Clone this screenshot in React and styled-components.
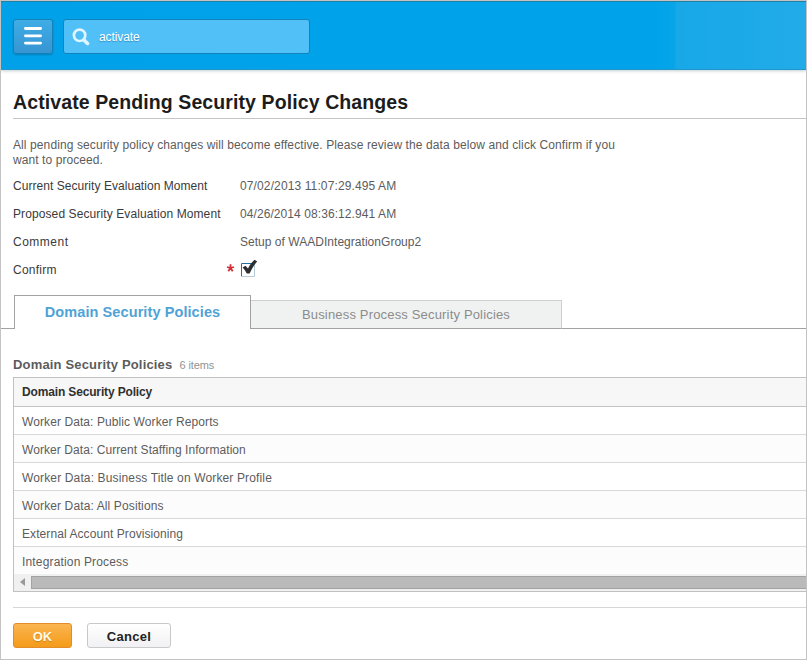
import React from "react";
import styled, { createGlobalStyle } from "styled-components";

const GlobalStyle = createGlobalStyle`
  * { box-sizing: border-box; }
  body {
    margin: 0;
    background: #fff;
    font-family: "Liberation Sans", Arial, sans-serif;
    font-size: 12px;
    color: #5c5c5c;
  }
`;

const Window = styled.div`
  width: 807px;
  height: 660px;
  border: 1px solid #c3c3c3;
  overflow: hidden;
  background: #fff;
`;

const TopBar = styled.header`
  height: 69px;
  padding: 17px 12px 0;
  display: flex;
  gap: 10px;
  border-top: 1px solid #2180a6;
  border-bottom: 1px solid #2196cb;
  background: linear-gradient(90deg, #00a1e8 0, #00a3ea 655px, #08a5e8 674px, #18a8e8 675px, #22abe8 100%);
  box-shadow: 0 1px 3px rgba(0, 60, 80, 0.25);
`;

const MenuButton = styled.button`
  width: 40px;
  height: 35px;
  padding: 0 0 1px;
  border: 1px solid #1482b8;
  border-radius: 3px;
  background: linear-gradient(#3fade6, #3695d2);
  box-shadow: 0 1px 2px rgba(0, 70, 110, 0.35);
  display: flex;
  align-items: center;
  justify-content: center;
`;

const SearchBox = styled.div`
  width: 247px;
  height: 35px;
  padding: 0 8px;
  border: 1px solid #1283b9;
  border-radius: 3px;
  background: #50c0f7;
  display: flex;
  align-items: center;
  gap: 9px;
`;

const Query = styled.span`
  color: #fff;
  letter-spacing: -0.1px;
  text-shadow: 0 1px 1px rgba(0, 80, 130, 0.4);
`;

const Title = styled.h1`
  margin: 0 0 0 12px;
  height: 49px;
  padding-top: 20px;
  border-bottom: 1px solid #c5c5c5;
  font-size: 19.5px;
  line-height: 24px;
  font-weight: bold;
  color: #1c1c1c;
  letter-spacing: 0.1px;
  white-space: nowrap;
`;

const Intro = styled.p`
  margin: 19px 0 0 12px;
  line-height: 15px;
  white-space: nowrap;
`;

const IntroLine = styled.span`
  display: block;
  letter-spacing: ${(p) => p.$track || 0}px;
`;

const Fields = styled.dl`
  margin: 4px 0 0 12px;
`;

const Field = styled.div`
  height: 28px;
  display: grid;
  grid-template-columns: 213px 14px 1fr;
  align-items: center;
  white-space: nowrap;
`;

const Label = styled.dt`
  color: #3a3a3a;
  letter-spacing: ${(p) => p.$track || 0}px;
`;

const Required = styled.span`
  height: 15px;
  svg { display: block; }
`;

const Value = styled.dd`
  margin: 0;
  letter-spacing: ${(p) => p.$track || 0}px;
`;

const CheckCell = styled.dd`
  margin: 0;
  padding-bottom: 4px;
  svg { display: block; }
`;

const Tabs = styled.nav`
  display: flex;
  align-items: flex-end;
  margin-top: 11px;
  height: 34px;
  &::before { content: ""; width: 13px; border-bottom: 1px solid #a2a2a2; }
  &::after { content: ""; flex: 1; border-bottom: 1px solid #a2a2a2; }
`;

const ActiveTab = styled.div`
  width: 237px;
  height: 34px;
  border: 1px solid #a2a2a2;
  border-bottom: 0;
  text-align: center;
  font-size: 14.5px;
  line-height: 32px;
  font-weight: bold;
  color: #4fa3d6;
  letter-spacing: 0.09px;
`;

const Tab = styled.div`
  width: 311px;
  height: 29px;
  border: 1px solid #cfcfcf;
  border-left: 0;
  border-bottom-color: #a2a2a2;
  background: #f0f2f1;
  text-align: center;
  font-size: 13px;
  line-height: 27px;
  color: #8c8c8c;
  letter-spacing: 0.17px;
`;

const Caption = styled.div`
  margin: 27px 0 0 12px;
  height: 21px;
  line-height: 18px;
  display: flex;
  gap: 7px;
`;

const CaptionTitle = styled.h2`
  margin: 0;
  font-size: 13px;
  font-weight: bold;
  letter-spacing: 0.17px;
`;

const Count = styled.span`
  font-size: 11px;
  line-height: 19px;
  color: #929292;
  letter-spacing: -0.1px;
`;

const Grid = styled.div`
  margin-left: 12px;
  height: 215px;
  border: 1px solid #c1c1c1;
  border-right: 0;
`;

const HeadRow = styled.div`
  height: 29px;
  padding-left: 8px;
  line-height: 29px;
  border-bottom: 1px solid #c3c3c3;
  background: #f7f7f7;
  color: #303030;
  font-weight: bold;
  letter-spacing: -0.15px;
`;

const Row = styled.div`
  height: 28px;
  padding-left: 8px;
  line-height: 30px;
  letter-spacing: ${(p) => p.$track || 0}px;
  border-bottom: 1px solid #d8d8d8;
  &:nth-child(odd) { background: #fcfcfc; }
  &:nth-last-child(2) { height: 27px; border-bottom: 0; }
`;

const ScrollTrack = styled.div`
  height: 17px;
  display: flex;
  background: #f0f0f0;
`;

const ScrollArrow = styled.span`
  width: 17px;
  padding: 4px 0 0 6px;
  svg { display: block; }
`;

const Thumb = styled.div`
  flex: 1;
  margin-top: 2px;
  height: 13px;
  border: 1px solid #a3a3a3;
  border-right: 0;
  background: #bababa;
`;

const Actions = styled.footer`
  margin: 15px 0 0 12px;
  padding-top: 15px;
  border-top: 1px solid #d6d6d6;
  display: flex;
  gap: 15px;
`;

const Button = styled.button`
  width: ${(p) => (p.$primary ? 59 : 84)}px;
  height: 25px;
  padding: 1px 0 0;
  border: 1px solid ${(p) => (p.$primary ? "#e28c2b" : "#c9c9c9")};
  border-radius: 3px;
  background: ${(p) => (p.$primary ? "linear-gradient(#fbb550, #f49b19)" : "linear-gradient(#fff, #f1f1f3)")};
  color: ${(p) => (p.$primary ? "#fffbe9" : "#222")};
  font: bold 13px "Liberation Sans", Arial, sans-serif;
  letter-spacing: ${(p) => (p.$primary ? 0 : 0.3)}px;
  text-shadow: ${(p) => (p.$primary ? "0 1px 1px rgba(150, 80, 0, .4)" : "none")};
`;

const MenuIcon = () => (
  <svg width="18" height="18" viewBox="0 0 18 18" fill="none" stroke="#fff" strokeWidth="2.8" strokeLinecap="round">
    <path d="M1.4 1.5H16.6M1.4 8.8H16.6M1.4 16.1H16.6" />
  </svg>
);

const SearchIcon = () => (
  <svg width="18" height="18" viewBox="0 0 18 18" fill="none" stroke="#dff5ff">
    <circle cx="7.6" cy="7.3" r="5.7" strokeWidth="2.7" />
    <path d="M12 11.9L15.5 15.4" strokeWidth="3.6" strokeLinecap="round" />
  </svg>
);

const Asterisk = () => (
  <svg width="9" height="10" viewBox="0 0 9 10" stroke="#d42e36" strokeWidth="1.8">
    <path d="M4.5 5V1.2M4.5 5L1 4M4.5 5L8 4M4.5 5L2.3 8.3M4.5 5L6.7 8.3" />
  </svg>
);

const Checkbox = () => (
  <svg width="18" height="18" viewBox="0 0 18 18" fill="none">
    <path d="M1.5 17V4.5H14" stroke="#246f9c" />
    <path d="M14.5 4V17.5H1" stroke="#b6cbdc" />
    <path d="M2.6 8.6L5.5 6.8L8 9.6C9.6 6.3 11.8 3.2 14.5 0.8L17.2 2.4C14 6 12 9.8 9.6 14.4L6.8 14.5C5.7 12.4 4.3 10.3 2.6 8.6Z" fill="#2c2e31" />
  </svg>
);

const fields = [
  ["Current Security Evaluation Moment", "07/02/2013 11:07:29.495 AM", 0.05, 0.12],
  ["Proposed Security Evaluation Moment", "04/26/2014 08:36:12.941 AM", 0.1, 0.08],
  ["Comment", "Setup of WAADIntegrationGroup2", 0.5, 0.03],
];

const policies = [
  ["Worker Data: Public Worker Reports", 0.09],
  ["Worker Data: Current Staffing Information", 0.07],
  ["Worker Data: Business Title on Worker Profile", 0.14],
  ["Worker Data: All Positions", 0.12],
  ["External Account Provisioning", 0.08],
  ["Integration Process", 0.16],
];

export default function App() {
  return (
    <Window>
      <GlobalStyle />
      <TopBar>
        <MenuButton aria-label="Menu"><MenuIcon /></MenuButton>
        <SearchBox>
          <SearchIcon />
          <Query>activate</Query>
        </SearchBox>
      </TopBar>
      <Title>Activate Pending Security Policy Changes</Title>
      <Intro>
        <IntroLine $track={0.1}>All pending security policy changes will become effective. Please review the data below and click Confirm if you</IntroLine>
        <IntroLine $track={0.08}>want to proceed.</IntroLine>
      </Intro>
      <Fields>
        {fields.map(([label, value, labelTrack, valueTrack]) => (
          <Field key={label}>
            <Label $track={labelTrack}>{label}</Label>
            <span />
            <Value $track={valueTrack}>{value}</Value>
          </Field>
        ))}
        <Field>
          <Label $track={0.25}>Confirm</Label>
          <Required><Asterisk /></Required>
          <CheckCell><Checkbox /></CheckCell>
        </Field>
      </Fields>
      <Tabs>
        <ActiveTab>Domain Security Policies</ActiveTab>
        <Tab>Business Process Security Policies</Tab>
      </Tabs>
      <Caption>
        <CaptionTitle>Domain Security Policies</CaptionTitle>
        <Count>6 items</Count>
      </Caption>
      <Grid>
        <HeadRow>Domain Security Policy</HeadRow>
        {policies.map(([name, track]) => <Row key={name} $track={track}>{name}</Row>)}
        <ScrollTrack>
          <ScrollArrow>
            <svg width="5" height="8" viewBox="0 0 5 8"><path d="M5 0V8L0 4Z" fill="#999" /></svg>
          </ScrollArrow>
          <Thumb />
        </ScrollTrack>
      </Grid>
      <Actions>
        <Button $primary>OK</Button>
        <Button>Cancel</Button>
      </Actions>
    </Window>
  );
}
